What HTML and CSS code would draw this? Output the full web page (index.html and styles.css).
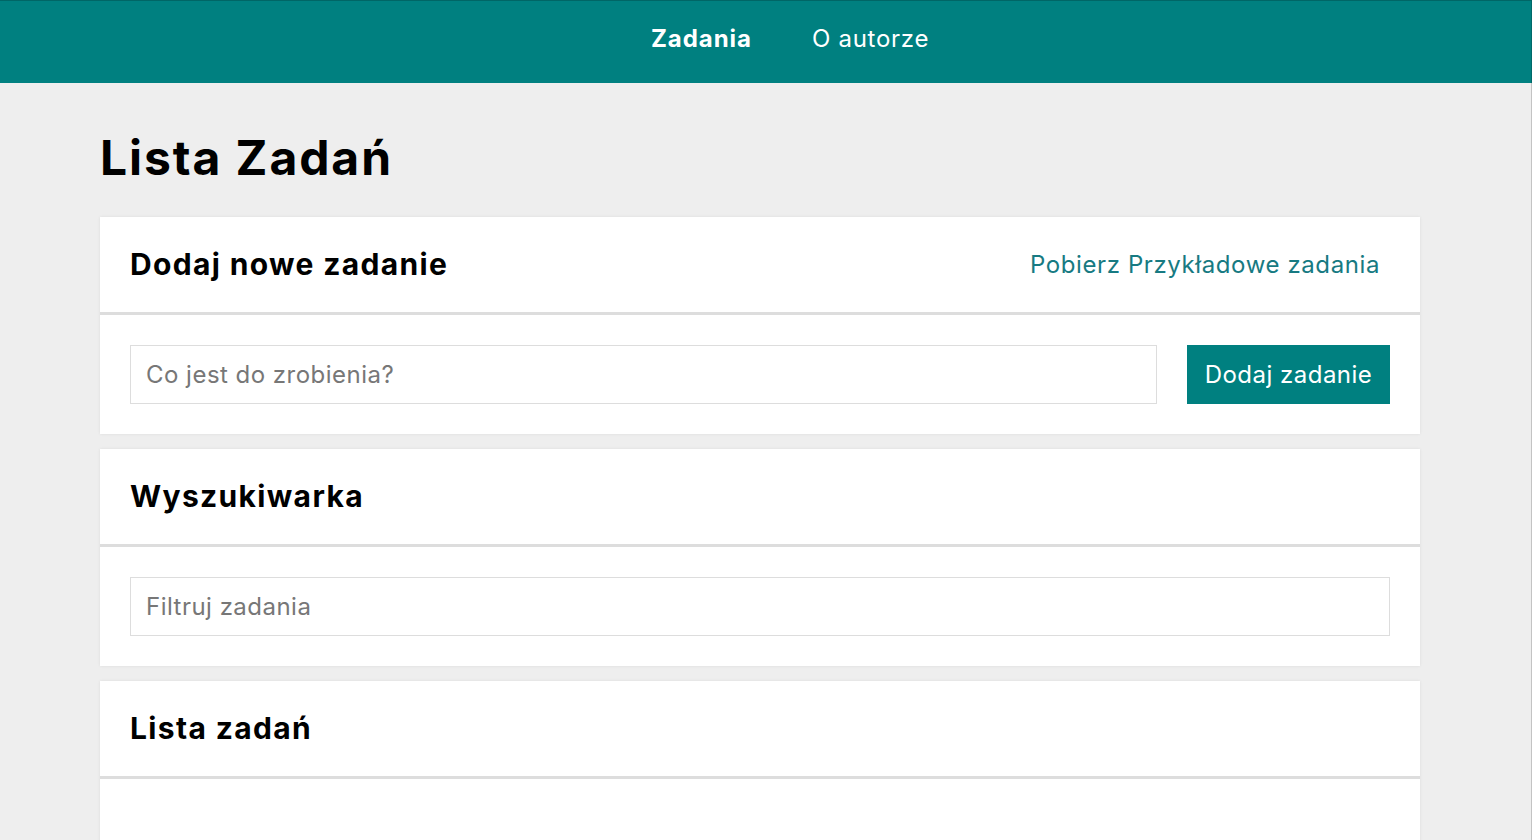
FILE: index.html
```html
<!DOCTYPE html>
<html lang="pl">
<head>
<meta charset="utf-8">
<title>Lista Zadań</title>
<link rel="stylesheet" href="styles.css">
</head>
<body>
<header class="topbar">
  <ul class="nav">
    <li class="nav-item active">Zadania</li>
    <li class="nav-item">O autorze</li>
  </ul>
</header>
<main class="container">
  <h1 class="page-title">Lista Zadań</h1>
  <section class="card">
    <div class="card-header">
      <h2 class="card-title">Dodaj nowe zadanie</h2>
      <a class="card-link" href="#">Pobierz Przykładowe zadania</a>
    </div>
    <div class="card-body row">
      <input class="field" type="text" placeholder="Co jest do zrobienia?">
      <button class="btn" type="button">Dodaj zadanie</button>
    </div>
  </section>
  <section class="card">
    <div class="card-header">
      <h2 class="card-title">Wyszukiwarka</h2>
    </div>
    <div class="card-body">
      <input class="field" type="text" placeholder="Filtruj zadania">
    </div>
  </section>
  <section class="card">
    <div class="card-header">
      <h2 class="card-title">Lista zadań</h2>
    </div>
    <div class="card-body tall"></div>
  </section>
</main>
</body>
</html>
```
FILE: styles.css
```css
* { box-sizing: border-box; }
html, body { margin: 0; padding: 0; }
body {
  background: #eeeeee;
  font-family: Inter, "Open Sans", sans-serif;
  color: #000;
  overflow: hidden;
  height: 840px;
}
body::after {
  content: "";
  position: fixed;
  top: 0;
  left: 0;
  right: 0;
  bottom: 0;
  border-top: 1px solid rgba(0, 0, 0, 0.2);
  border-right: 1px solid rgba(0, 0, 0, 0.18);
  pointer-events: none;
}
.topbar {
  background: #008080;
  height: 83px;
  display: flex;
  align-items: center;
  justify-content: center;
  padding-bottom: 5px;
}
.nav {
  list-style: none;
  margin: 0;
  padding: 0 0 0 48px;
  display: flex;
}
.nav-item {
  color: #fff;
  font-size: 24px;
  padding: 0 30px;
  line-height: 30px;
  letter-spacing: 0.03em;
}
.nav-item.active { font-weight: 700; letter-spacing: 0.04em; }
.container {
  width: 1320px;
  margin: 0 0 0 100px;
  padding-top: 45px;
}
.page-title {
  font-size: 48px;
  font-weight: 700;
  margin: 0 0 29px;
  line-height: 60px;
  letter-spacing: 0.04em;
}
.card {
  background: #fff;
  box-shadow: 0 0 3px rgba(0, 0, 0, 0.08);
  margin-bottom: 15px;
}
.card-header {
  display: flex;
  align-items: center;
  justify-content: space-between;
  padding: 30px 40px 30px 30px;
  height: 98px;
  border-bottom: 3px solid #dddddd;
}
.card-title {
  margin: 0;
  font-size: 30px;
  font-weight: 700;
  line-height: 35px;
  letter-spacing: 0.045em;
}
.card-link {
  color: #177a82;
  font-size: 24px;
  text-decoration: none;
  letter-spacing: 0.025em;
}
.card-body {
  padding: 30px;
}
.card-body.row {
  display: flex;
  gap: 30px;
}
.card-body.tall { height: 70px; }
.field {
  flex: 1;
  width: 100%;
  height: 59px;
  border: 1px solid #dddddd;
  padding: 0 15px;
  font-family: inherit;
  font-size: 24px;
  color: #333;
  background: #fff;
  outline: none;
  letter-spacing: 0.02em;
}
.field::placeholder { color: #777; }
.btn {
  height: 59px;
  width: 203px;
  background: #008080;
  color: #fff;
  border: 0;
  font-family: inherit;
  font-size: 24px;
  padding: 0 15px;
  letter-spacing: 0.02em;
}
```
